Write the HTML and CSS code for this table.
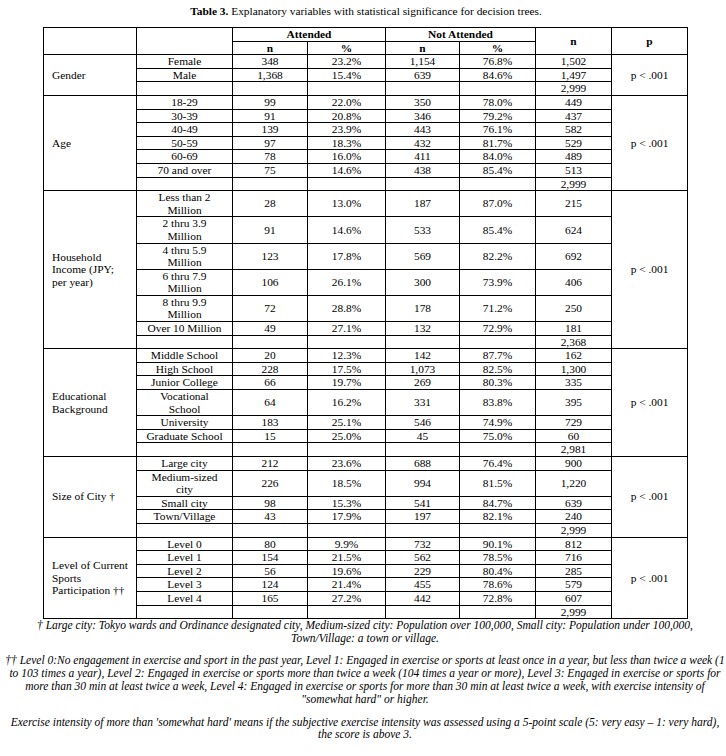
FILE: index.html
```html
<!DOCTYPE html>
<html lang="en">
<head>
<meta charset="utf-8">
<title>Table 3</title>
<link rel="stylesheet" href="styles.css">
</head>
<body>
<p class="title"><b>Table 3.</b> Explanatory variables with statistical significance for decision trees.</p>
<table class="tbl">
  <colgroup>
    <col class="c-lab"><col class="c-cat"><col class="c-an"><col class="c-ap"><col class="c-nn"><col class="c-np"><col class="c-tot"><col class="c-p">
  </colgroup>
  <thead>
    <tr>
      <td rowspan="2"></td>
      <td rowspan="2"></td>
      <th colspan="2">Attended</th>
      <th colspan="2">Not Attended</th>
      <th rowspan="2">n</th>
      <th rowspan="2">p</th>
    </tr>
    <tr>
      <th>n</th><th>%</th><th>n</th><th>%</th>
    </tr>
  </thead>
  <tbody>
    <tr><td class="lab" rowspan="3">Gender</td><td>Female</td><td>348</td><td>23.2%</td><td>1,154</td><td>76.8%</td><td>1,502</td><td class="p" rowspan="3">p &lt; .001</td></tr>
    <tr><td>Male</td><td>1,368</td><td>15.4%</td><td>639</td><td>84.6%</td><td>1,497</td></tr>
    <tr><td></td><td></td><td></td><td></td><td></td><td>2,999</td></tr>

    <tr><td class="lab" rowspan="7">Age</td><td>18-29</td><td>99</td><td>22.0%</td><td>350</td><td>78.0%</td><td>449</td><td class="p" rowspan="7">p &lt; .001</td></tr>
    <tr><td>30-39</td><td>91</td><td>20.8%</td><td>346</td><td>79.2%</td><td>437</td></tr>
    <tr><td>40-49</td><td>139</td><td>23.9%</td><td>443</td><td>76.1%</td><td>582</td></tr>
    <tr><td>50-59</td><td>97</td><td>18.3%</td><td>432</td><td>81.7%</td><td>529</td></tr>
    <tr><td>60-69</td><td>78</td><td>16.0%</td><td>411</td><td>84.0%</td><td>489</td></tr>
    <tr><td>70 and over</td><td>75</td><td>14.6%</td><td>438</td><td>85.4%</td><td>513</td></tr>
    <tr><td></td><td></td><td></td><td></td><td></td><td>2,999</td></tr>

    <tr><td class="lab" rowspan="7">Household Income (JPY; per year)</td><td>Less than 2 Million</td><td>28</td><td>13.0%</td><td>187</td><td>87.0%</td><td>215</td><td class="p" rowspan="7">p &lt; .001</td></tr>
    <tr><td>2 thru 3.9 Million</td><td>91</td><td>14.6%</td><td>533</td><td>85.4%</td><td>624</td></tr>
    <tr><td>4 thru 5.9 Million</td><td>123</td><td>17.8%</td><td>569</td><td>82.2%</td><td>692</td></tr>
    <tr><td>6 thru 7.9 Million</td><td>106</td><td>26.1%</td><td>300</td><td>73.9%</td><td>406</td></tr>
    <tr><td>8 thru 9.9 Million</td><td>72</td><td>28.8%</td><td>178</td><td>71.2%</td><td>250</td></tr>
    <tr><td>Over 10 Million</td><td>49</td><td>27.1%</td><td>132</td><td>72.9%</td><td>181</td></tr>
    <tr><td></td><td></td><td></td><td></td><td></td><td>2,368</td></tr>

    <tr><td class="lab" rowspan="7">Educational Background</td><td>Middle School</td><td>20</td><td>12.3%</td><td>142</td><td>87.7%</td><td>162</td><td class="p" rowspan="7">p &lt; .001</td></tr>
    <tr><td>High School</td><td>228</td><td>17.5%</td><td>1,073</td><td>82.5%</td><td>1,300</td></tr>
    <tr><td>Junior College</td><td>66</td><td>19.7%</td><td>269</td><td>80.3%</td><td>335</td></tr>
    <tr><td>Vocational School</td><td>64</td><td>16.2%</td><td>331</td><td>83.8%</td><td>395</td></tr>
    <tr><td>University</td><td>183</td><td>25.1%</td><td>546</td><td>74.9%</td><td>729</td></tr>
    <tr><td>Graduate School</td><td>15</td><td>25.0%</td><td>45</td><td>75.0%</td><td>60</td></tr>
    <tr><td></td><td></td><td></td><td></td><td></td><td>2,981</td></tr>

    <tr><td class="lab" rowspan="5">Size of City †</td><td>Large city</td><td>212</td><td>23.6%</td><td>688</td><td>76.4%</td><td>900</td><td class="p" rowspan="5">p &lt; .001</td></tr>
    <tr><td>Medium-sized city</td><td>226</td><td>18.5%</td><td>994</td><td>81.5%</td><td>1,220</td></tr>
    <tr><td>Small city</td><td>98</td><td>15.3%</td><td>541</td><td>84.7%</td><td>639</td></tr>
    <tr><td>Town/Village</td><td>43</td><td>17.9%</td><td>197</td><td>82.1%</td><td>240</td></tr>
    <tr><td></td><td></td><td></td><td></td><td></td><td>2,999</td></tr>

    <tr><td class="lab" rowspan="6">Level of Current Sports Participation ††</td><td>Level 0</td><td>80</td><td>9.9%</td><td>732</td><td>90.1%</td><td>812</td><td class="p" rowspan="6">p &lt; .001</td></tr>
    <tr><td>Level 1</td><td>154</td><td>21.5%</td><td>562</td><td>78.5%</td><td>716</td></tr>
    <tr><td>Level 2</td><td>56</td><td>19.6%</td><td>229</td><td>80.4%</td><td>285</td></tr>
    <tr><td>Level 3</td><td>124</td><td>21.4%</td><td>455</td><td>78.6%</td><td>579</td></tr>
    <tr><td>Level 4</td><td>165</td><td>27.2%</td><td>442</td><td>72.8%</td><td>607</td></tr>
    <tr><td></td><td></td><td></td><td></td><td></td><td>2,999</td></tr>
  </tbody>
</table>
<div class="notes">
  <p>† Large city: Tokyo wards and Ordinance designated city, Medium-sized city: Population over 100,000, Small city: Population under 100,000,<br>Town/Village: a town or village.</p>
  <p>†† Level 0:No engagement in exercise and sport in the past year, Level 1: Engaged in exercise or sports at least once in a year, but less than twice a week (1<br>to 103 times a year), Level 2: Engaged in exercise or sports more than twice a week (104 times a year or more), Level 3: Engaged in exercise or sports for<br>more than 30 min at least twice a week, Level 4: Engaged in exercise or sports for more than 30 min at least twice a week, with exercise intensity of<br>"somewhat hard" or higher.</p>
  <p>Exercise intensity of more than 'somewhat hard' means if the subjective exercise intensity was assessed using a 5-point scale (5: very easy – 1: very hard),<br>the score is above 3.</p>
</div>
</body>
</html>
```

FILE: styles.css
```css
html, body {
  margin: 0;
  padding: 0;
  background: #ffffff;
}

body {
  color: #000000;
  font-family: "Liberation Serif", "Times New Roman", serif;
  font-size: 11.4px;
  width: 726px;
}

.title {
  margin: 0 0 9px 0;
  padding-top: 5px;
  line-height: 13px;
  text-align: center;
  padding-left: 6px;
}

.tbl {
  margin-left: 43px;
  width: 645px;
  table-layout: fixed;
  border-collapse: collapse;
}

.c-lab { width: 93px; }
.c-cat { width: 96px; }
.c-an { width: 75px; }
.c-ap { width: 78px; }
.c-nn { width: 74px; }
.c-np { width: 76px; }
.c-tot { width: 76px; }
.c-p { width: 76px; }

.tbl td,
.tbl th {
  border: 1px solid #000000;
  padding: 0 8px;
  line-height: 12.6px;
  text-align: center;
  vertical-align: middle;
  font-weight: normal;
}

.tbl th {
  font-weight: bold;
}

.tbl td.lab {
  text-align: left;
  padding: 0 5px 0 8px;
}

.notes {
  margin-left: 4px;
  width: 722px;
  font-size: 11.5px;
  font-style: italic;
  text-align: center;
  line-height: 12.9px;
  white-space: nowrap;
}

.notes p {
  margin: 0 0 9.5px 0;
}
```
